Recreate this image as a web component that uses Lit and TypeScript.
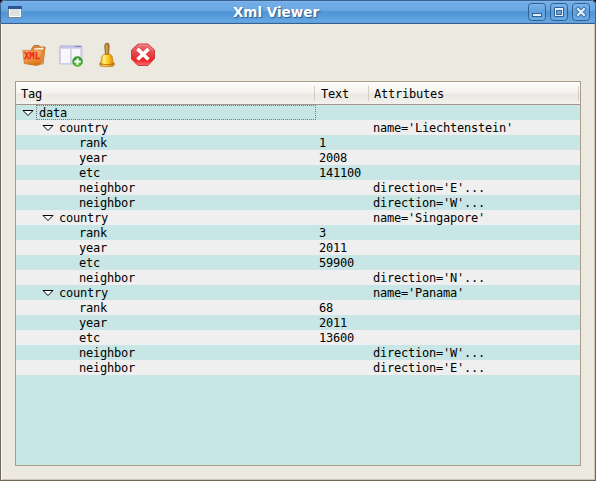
import { LitElement, html, svg, css } from "lit";
import { customElement } from "lit/decorators.js";
import { classMap } from "lit/directives/class-map.js";

type Row = { tag: string; depth: number; text?: string; attrs?: string; open?: boolean };

const rows: Row[] = [
  { tag: "data", depth: 0, open: true },
  { tag: "country", depth: 1, attrs: "name='Liechtenstein'", open: true },
  { tag: "rank", depth: 2, text: "1" },
  { tag: "year", depth: 2, text: "2008" },
  { tag: "etc", depth: 2, text: "141100" },
  { tag: "neighbor", depth: 2, attrs: "direction='E'..." },
  { tag: "neighbor", depth: 2, attrs: "direction='W'..." },
  { tag: "country", depth: 1, attrs: "name='Singapore'", open: true },
  { tag: "rank", depth: 2, text: "3" },
  { tag: "year", depth: 2, text: "2011" },
  { tag: "etc", depth: 2, text: "59900" },
  { tag: "neighbor", depth: 2, attrs: "direction='N'..." },
  { tag: "country", depth: 1, attrs: "name='Panama'", open: true },
  { tag: "rank", depth: 2, text: "68" },
  { tag: "year", depth: 2, text: "2011" },
  { tag: "etc", depth: 2, text: "13600" },
  { tag: "neighbor", depth: 2, attrs: "direction='W'..." },
  { tag: "neighbor", depth: 2, attrs: "direction='E'..." },
];

const glyphs = {
  minimize: svg`<rect x="4.500" y="10.500" width="9" height="3" fill="#e4f1fc" stroke="#315f91"/>`,
  maximize: svg`<path d="M4.500 4.500h9v9h-9z" fill="#e4f1fc" stroke="#315f91"/><path d="M6.500 7.500h5v4h-5z" fill="#6aa7e2" stroke="#315f91"/>`,
  close: svg`<path d="M6 6l6 6M12 6l-6 6" stroke="#3d6fa3" stroke-width="4" stroke-linecap="square"/><path d="M6 6l6 6M12 6l-6 6" stroke="#e4f1fc" stroke-width="2.200" stroke-linecap="square"/>`,
};

@customElement("window-button")
class WindowButton extends LitElement {
  static properties = { kind: {} };
  declare kind: keyof typeof glyphs;
  static styles = css`
    :host { display: block; width: 18px; height: 18px; }
    svg { display: block; }
  `;
  render() {
    return html`<svg width="18" height="18" viewBox="0 0 18 18">
      <defs><linearGradient id="b" x2="0" y2="1"><stop stop-color="#7db6ee"/><stop offset=".5" stop-color="#5e9fdc"/><stop offset="1" stop-color="#6cabe5"/></linearGradient></defs>
      <rect x=".5" y=".5" width="17" height="17" rx="3" fill="url(#b)" stroke="#31608f"/>
      ${glyphs[this.kind]}
    </svg>`;
  }
}

@customElement("app-root")
class AppRoot extends LitElement {
  static styles = css`
    :host { display: block; width: 596px; height: 481px; overflow: hidden; background: #06071f; }
    * { box-sizing: border-box; }
    .window { height: 481px; display: flex; flex-direction: column; border-radius: 5px 5px 0 0; overflow: hidden; background: #ece9e1; }
    .titlebar { height: 24px; flex: none; display: grid; grid-template-columns: 68px 1fr 112px; align-items: start;
      border: 1px solid #35608f; border-radius: 5px 5px 0 0;
      background: linear-gradient(#8dbdee 0, #72ade8 1px, #6ba8e3 9px, #5095d5 11px, #5297d8 13px, #67a7e3 21px, #5795d3 22px); }
    .app-icon { display: block; margin: 5px 0 0 7px; }
    .title { text-align: center; font: bold 13.500px/23px "DejaVu Sans", sans-serif; color: #fff;
      text-shadow: 1px 1px 1px #2c5a8c; white-space: nowrap; }
    .buttons { display: flex; gap: 4px; justify-content: flex-end; padding-right: 5px; margin-top: 2px; }
    .body { flex: 1; display: flex; flex-direction: column; border: solid #706559; border-width: 0 1px 1px; box-shadow: inset 1px 0 #faf8f5, inset -1px -1px #cfc5b8; padding: 14px; }
    .toolbar { height: 43px; flex: none; display: flex; padding: 3px 0 0 7px; gap: 12px; }
    .toolbar svg { display: block; width: 24px; height: 28px; flex: none; }
    .toolbar svg:first-child { margin-right: 1px; }
    .xml { font: bold 9.500px "DejaVu Sans Mono", monospace; fill: #f5281c; stroke: #f5281c; stroke-width: .3px; }
    .tree { flex: 1; border: 1px solid #a79d89; background: #c8e6e5; color: #000;
      font: 12px/15px "DejaVu Sans Mono", monospace; letter-spacing: -.224px; white-space: nowrap; }
    .header, .row { display: grid; grid-template-columns: 300px 54px 1fr; }
    .header { height: 23px; grid-template-columns: 299px 54px 1fr; border-bottom: 1px solid #a79686; background: linear-gradient(#fdfdfc 0, #f4f2ee 11px, #ebe8e2 12px, #f3f1ed 22px); }
    .header span { height: 15px; margin-top: 4px; padding-left: 5px; border-right: 1px solid #d5cec1; line-height: 17px; }
    .header span:nth-child(2) { padding-left: 6px; }
    .header span:last-child { margin-right: 1px; }
    .row { height: 15px; line-height: 16px; }
    .row.plain { background: #efefef; }
    .tag { display: flex; height: 15px; }
    .arrow { width: 12px; height: 15px; flex: none; }
    .leaf { width: 12px; flex: none; }
    .label { flex: 1; padding-left: 3px; margin-left: 2px; }
    .label.focus { outline: 1px dotted #777; outline-offset: -1px; }
    .depth0 { padding-left: 6px; }
    .depth1 { padding-left: 26px; }
    .depth2 { padding-left: 46px; }
    .text { padding-left: 3px; }
    .attrs { padding-left: 3px; }
  `;

  private toolbar() {
    return html`<div class="toolbar">
      <svg viewBox="0 0 24 28">
        <defs><linearGradient id="f" x2=".3" y2="1"><stop stop-color="#f8b56c"/><stop offset=".55" stop-color="#f2a14e"/><stop offset="1" stop-color="#dd7619"/></linearGradient></defs>
        <path d="M10 7l2-2.500h5l1 1.500h5l-2 17H6z" fill="#d98535" stroke="#a9692c" stroke-width=".8"/>
        <path d="M12 7.500l9.500-1-1 16-4 1z" fill="#fff1df"/>
        <path d="M20 9l3.500-2.500L21.500 21l-3.500 3z" fill="#df8937"/>
        <path d="M.8 9.500Q10 9.500 19.500 8.800L18.500 22.500Q17.500 24.700 14 24.500L2.300 22.500Z" fill="url(#f)" stroke="#c9792f" stroke-width=".7"/>
        <text class="xml" x="2" y="17.500" textLength="16" lengthAdjust="spacingAndGlyphs">XML</text>
      </svg>
      <svg viewBox="0 0 24 28">
        <defs><radialGradient id="g" cy=".65"><stop stop-color="#80df35"/><stop offset="1" stop-color="#25962b"/></radialGradient></defs>
        <rect x=".5" y="4.500" width="22.500" height="18.500" rx="1" fill="#d7d6e8" stroke="#c6c5db"/>
        <path d="M1 5h21.500v2H1z" fill="#c3c3e3"/><path d="M16 5.500h6" stroke="#8183bb"/>
        <path d="M2 8h9v14H2zM13 8h8v14h-8z" fill="#f8f8fb"/>
        <circle cx="18.500" cy="20.500" r="5" fill="url(#g)" stroke="#5aaa48" stroke-width=".6"/>
        <path d="M18.500 17.200v6.600M15.200 20.500h6.600" stroke="#fff" stroke-width="2"/>
      </svg>
      <svg viewBox="0 0 24 28">
        <defs><linearGradient id="bell"><stop stop-color="#db8d0c"/><stop offset=".3" stop-color="#fff179"/><stop offset=".55" stop-color="#ffcc23"/><stop offset="1" stop-color="#d17505"/></linearGradient></defs>
        <ellipse cx="12" cy="24.800" rx="7.500" ry="1.300" fill="#b9a98f"/>
        <path d="M10.500 14L9.800 5Q9.800 2 12 2T14.200 5L13.500 14Z" fill="#bd8437" stroke="#86551b" stroke-width=".8"/>
        <path d="M11.700 4v8" stroke="#e9bb6d" stroke-width=".8"/>
        <path d="M8.500 13.500h7q2 1 2 4 0 3.500 2.200 5.500Q19 25.500 12 25.500T4.300 23Q6.500 21 6.500 17.500q0-3 2-4z" fill="url(#bell)" stroke="#c67a0b" stroke-width=".7"/>
        <path d="M5 22.800q7 2 14 0" fill="none" stroke="#a95a08" stroke-width=".8"/>
      </svg>
      <svg viewBox="0 0 24 28">
        <defs><linearGradient id="r" x2="0" y2="1"><stop stop-color="#e97474"/><stop offset=".5" stop-color="#e54045"/><stop offset=".75" stop-color="#ef2028"/><stop offset="1" stop-color="#fa7673"/></linearGradient></defs>
        <path d="M7 3h10l6.500 6v8.500L17 24.500H7L.5 18V9z" fill="url(#r)" stroke="#cd3035" stroke-width=".9"/>
        <path d="M7.400 4.200h9.200l5.700 5.300" stroke="#f4a0a0" stroke-width=".8" fill="none"/>
        <path d="M6.500 8l11 10.500M17.500 8l-11 10.500" stroke="#fff" stroke-width="3.600"/>
      </svg>
    </div>`;
  }

  private row(r: Row, i: number) {
    return html`<div class=${classMap({ row: true, plain: i % 2 === 1 })}>
      <span class="tag depth${r.depth}">${r.open
        ? html`<svg class="arrow" viewBox="0 0 12 15"><path d="M1 5.500h10L6 10.500z" fill="#fff" stroke="#000"/></svg>`
        : html`<span class="leaf"></span>`}<span class=${classMap({ label: true, focus: i === 0 })}>${r.tag}</span></span>
      <span class="text">${r.text ?? ""}</span>
      <span class="attrs">${r.attrs ?? ""}</span>
    </div>`;
  }

  render() {
    return html`<div class="window">
      <div class="titlebar">
        <svg class="app-icon" width="14" height="12" viewBox="0 0 14 12"><rect x=".5" y=".5" width="13" height="11" fill="#dde1df" stroke="#7b8791"/><path d="M1.500 3v7.500h11V3" fill="none" stroke="#fff"/><path d="M0 0h14v3H0z" fill="#2a5590"/></svg>
        <div class="title">Xml Viewer</div>
        <div class="buttons"><window-button kind="minimize"></window-button><window-button kind="maximize"></window-button><window-button kind="close"></window-button></div>
      </div>
      <div class="body">
        ${this.toolbar()}
        <div class="tree">
          <div class="header"><span>Tag</span><span>Text</span><span>Attributes</span></div>
          ${rows.map((r, i) => this.row(r, i))}
        </div>
      </div>
    </div>`;
  }
}
